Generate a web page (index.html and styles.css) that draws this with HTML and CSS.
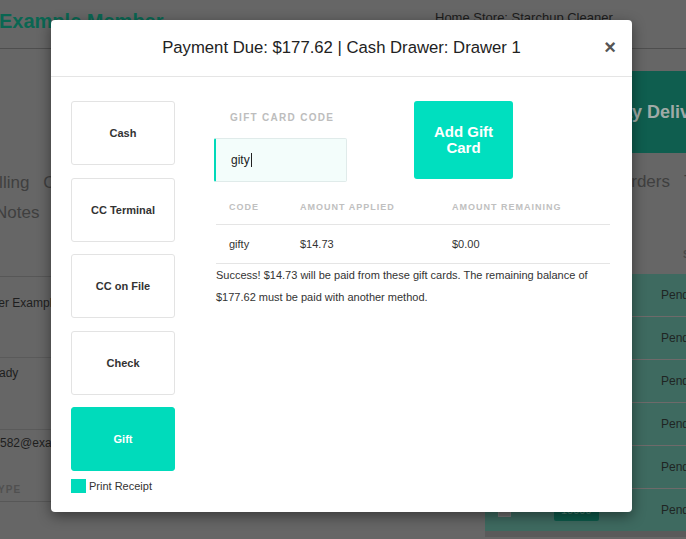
FILE: index.html
```html
<!DOCTYPE html>
<html>
<head>
<meta charset="utf-8">
<link rel="stylesheet" href="styles.css">
</head>
<body>
<div class="page">
  <header class="topbar">
    <h1 class="member">Example Member</h1>
    <div class="store">Home Store: Starchup Cleaner</div>
  </header>
  <div class="content">
    <div class="left-col">
      <div class="tabs"><span class="tab tab-first">Billing</span><span class="tab">Customer</span></div>
      <div class="tabs tabs-second"><span class="tab tab-notes">Notes</span></div>
      <div class="info-table">
        <div class="info-head info-head1">GROUP</div>
        <div class="info-row info-r1">Member Example</div>
        <div class="info-row info-r2">Brady</div>
        <div class="info-row info-r3">member582@example.com</div>
        <div class="info-head info-head2">TYPE</div>
      </div>
    </div>
    <div class="right-col">
      <div class="banner">Same Day Delivery</div>
      <div class="tabs tabs-right"><span class="tab">Orders</span><span class="tab">Tickets</span></div>
      <div class="orders-head">STATUS</div>
      <div class="orders">
        <div class="order-row"><span class="status">Pending</span></div>
        <div class="order-row"><span class="status">Pending</span></div>
        <div class="order-row"><span class="status">Pending</span></div>
        <div class="order-row"><span class="status">Pending</span></div>
        <div class="order-row"><span class="status">Pending</span></div>
        <div class="order-row order-last"><span class="chk"></span><span class="badge">10009</span><span class="status">Pending</span></div>
      </div>
    </div>
  </div>
</div>

<div class="modal">
  <div class="modal-header">
    <h2 class="modal-title">Payment Due: $177.62 | Cash Drawer: Drawer 1</h2>
    <span class="close">&times;</span>
  </div>
  <div class="modal-body">
    <div class="methods">
      <div class="method">Cash</div>
      <div class="method">CC Terminal</div>
      <div class="method">CC on File</div>
      <div class="method">Check</div>
      <div class="method method-active">Gift</div>
      <label class="receipt"><span class="box"></span>Print Receipt</label>
    </div>
    <div class="gift">
      <div class="gift-form">
        <div class="field">
          <div class="field-label">GIFT CARD CODE</div>
          <div class="field-input">gity<span class="caret"></span></div>
        </div>
        <div class="add-btn">Add Gift<br>Card</div>
      </div>
      <table class="cards">
        <thead>
          <tr><th class="c1">CODE</th><th class="c2">AMOUNT APPLIED</th><th class="c3">AMOUNT REMAINING</th></tr>
        </thead>
        <tbody>
          <tr><td>gifty</td><td>$14.73</td><td>$0.00</td></tr>
        </tbody>
      </table>
      <p class="success">Success! $14.73 will be paid from these gift cards. The remaining balance of $177.62 must be paid with another method.</p>
    </div>
  </div>
</div>
</body>
</html>
```
FILE: styles.css
```css
html, body {
  margin: 0;
  padding: 0;
}
body {
  background: #666666;
  font-family: "Liberation Sans", Arial, sans-serif;
  width: 686px;
  height: 539px;
  overflow: hidden;
  position: relative;
}
.page {
  width: 686px;
}
.topbar {
  height: 48px;
  border-bottom: 1px solid #4e4e4e;
  display: flex;
  align-items: flex-start;
}
.member {
  margin: 9px 0 0 -1px;
  font-size: 20px;
  line-height: 24px;
  font-weight: bold;
  color: #0a6652;
  width: 436px;
  white-space: nowrap;
}
.store {
  margin-top: 10px;
  font-size: 13px;
  color: #1c1c1c;
}
.content {
  display: grid;
  grid-template-columns: 485px 201px;
}
.left-col {
  padding-top: 121px;
  overflow: hidden;
}
.tabs {
  display: flex;
  font-size: 17px;
  color: #3f3f3f;
  height: 25px;
  line-height: 25px;
  white-space: nowrap;
}
.tab-first { margin-left: -16px; }
.tab { margin-right: 14px; }
.tabs-second { margin-top: 5px; }
.tab-notes { margin-left: -5px; }
.info-table {
  margin-top: 29px;
  font-size: 12px;
  line-height: 14px;
  color: #1e1e1e;
  white-space: nowrap;
}
.info-head {
  font-size: 10px;
  font-weight: bold;
  letter-spacing: 1px;
  color: #505050;
  height: 22px;
  line-height: 22px;
  border-bottom: 1px solid #575757;
}
.info-head1 { margin-left: -45px; }
.info-head2 { margin-left: -9px; margin-top: 29px; }
.info-row {
  box-sizing: border-box;
  border-bottom: 1px solid #5a5a5a;
}
.info-r1 { margin-left: -35px; height: 81px; padding-top: 19px; }
.info-r2 { margin-left: -13px; height: 72px; padding-top: 8px; }
.info-r3 { margin-left: -44px; height: 20px; padding-top: 6px; border-bottom: none; }
.right-col {
  position: relative;
}
.banner {
  margin-top: 22px;
  height: 82px;
  background: #0f5e4f;
  color: #a0aaa7;
  font-size: 18px;
  font-weight: bold;
  line-height: 82px;
  padding-left: 71px;
  white-space: nowrap;
  overflow: hidden;
}
.tabs-right {
  margin-top: 16px;
  padding-left: 133px;
}
.orders-head {
  margin-top: 51px;
  padding-left: 198px;
  font-size: 10px;
  font-weight: bold;
  color: #4a4a4a;
  height: 20px;
  line-height: 20px;
}
.orders {
  margin-top: 9px;
  background: #3e6a60;
  border-bottom: 6px solid #5a5a5a;
}
.order-row {
  height: 42px;
  border-bottom: 1px solid #6e6a6a;
  display: flex;
  align-items: center;
  font-size: 12px;
  color: #1f2523;
}
.order-last { border-bottom: none; }
.status {
  margin-left: auto;
  width: 25px;
  overflow: hidden;
  white-space: nowrap;
}
.chk {
  margin-left: 13px;
  width: 13px;
  height: 13px;
  background: #6d6d6d;
  border: 1px solid #777;
  box-sizing: border-box;
}
.badge {
  margin-left: 43px;
  background: #0d5a4a;
  color: #4f8276;
  font-size: 11px;
  padding: 5px 7px;
  border-radius: 2px;
}

/* modal */
.modal {
  position: absolute;
  left: 51px;
  top: 20px;
  width: 581px;
  height: 492px;
  background: #ffffff;
  border-radius: 4px;
  box-shadow: 0 4px 14px rgba(0, 0, 0, 0.45);
  color: #333;
}
.modal-header {
  height: 56px;
  border-bottom: 1px solid #e5e5e5;
  display: flex;
  align-items: center;
  justify-content: center;
  position: relative;
}
.modal-title {
  margin: 0;
  font-size: 16.7px;
  font-weight: normal;
  color: #222;
}
.close {
  position: absolute;
  right: 16px;
  top: 17px;
  font-size: 20px;
  font-weight: bold;
  line-height: 20px;
  color: #555;
}
.modal-body {
  display: flex;
  padding: 24px 22px 0 20px;
}
.methods {
  width: 104px;
  display: flex;
  flex-direction: column;
  gap: 12.5px;
  flex: none;
}
.method {
  height: 64px;
  box-sizing: border-box;
  border: 1px solid #e3e3e3;
  border-radius: 3px;
  display: flex;
  align-items: center;
  justify-content: center;
  font-size: 11px;
  font-weight: bold;
  color: #333;
}
.method-active {
  background: #00dbbb;
  border-color: #00dbbb;
  color: #fff;
}
.receipt {
  display: flex;
  align-items: center;
  margin-top: -5px;
  font-size: 11px;
  color: #333;
}
.box {
  width: 15px;
  height: 14px;
  background: #00dbbb;
  margin-right: 3px;
}
.gift {
  flex: 1;
  margin-left: 39px;
}
.gift-form {
  display: flex;
  align-items: flex-start;
}
.field {
  width: 133px;
}
.field-label {
  margin: 11px 0 14px 16px;
  font-size: 10px;
  line-height: 12px;
  font-weight: bold;
  letter-spacing: 1.3px;
  color: #bdbdbd;
  white-space: nowrap;
}
.field-input {
  height: 44px;
  box-sizing: border-box;
  background: #f3fdfb;
  border: 1px solid #e0ebea;
  border-left: 2px solid #00d9b9;
  border-radius: 2px;
  padding-left: 15px;
  display: flex;
  align-items: center;
  font-size: 12px;
  color: #222;
}
.caret {
  display: inline-block;
  width: 1px;
  height: 14px;
  background: #222;
  margin-left: 1px;
}
.add-btn {
  margin-left: 67px;
  width: 99px;
  height: 78px;
  background: #00dfbf;
  border-radius: 3px;
  color: #fff;
  font-size: 15px;
  font-weight: bold;
  line-height: 16px;
  display: flex;
  align-items: center;
  justify-content: center;
  text-align: center;
}
.cards {
  margin: 8px 0 0 2px;
  width: 394px;
  border-collapse: collapse;
  font-size: 11px;
  color: #333;
}
.cards th {
  height: 34px;
  text-align: left;
  font-size: 9px;
  font-weight: bold;
  letter-spacing: 1px;
  color: #c0c0c0;
  padding: 0 0 0 13px;
  border-bottom: 1px solid #e5e5e5;
}
.cards .c1 { width: 58px; }
.cards .c2 { width: 139px; }
.cards td {
  height: 38px;
  padding: 0 0 0 13px;
  border-bottom: 1px solid #e5e5e5;
}
.success {
  margin: 0 0 0 2px;
  font-size: 11px;
  line-height: 22px;
  color: #333;
}
```
